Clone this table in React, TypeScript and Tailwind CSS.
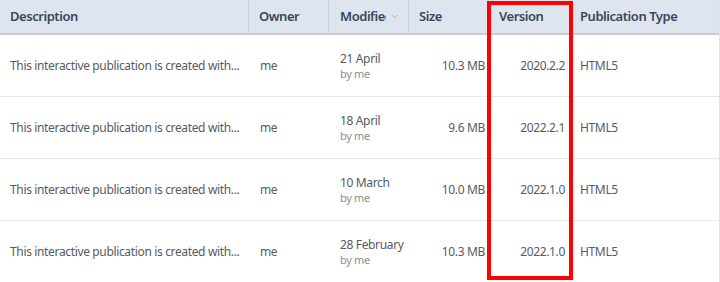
import React from 'react';
import { ChevronDown } from 'lucide-react';

const rows = [
  { date: '21 April', size: '10.3 MB', version: '2020.2.2' },
  { date: '18 April', size: '9.6 MB', version: '2022.2.1' },
  { date: '10 March', size: '10.0 MB', version: '2022.1.0' },
  { date: '28 February', size: '10.3 MB', version: '2022.1.0' },
];

const cols = 'grid grid-cols-[249px_80px_80px_80px_81px_1fr]';

const App: React.FC = () => {
  return (
    <div className="relative w-[720px] h-[282px] bg-white overflow-hidden font-['Noto_Sans',sans-serif]">
      <div className="border-r border-[#dfe3e8] h-full">
        {/* header */}
        <div className={`${cols} h-[35px] bg-[#dfe5ee] border-b-2 border-[#c8ced7] text-[13px] tracking-[-0.45px] font-semibold text-[#3a475a]`}>
          <div className="flex items-center pl-[10px] border-r border-[#c9d0da]">Description</div>
          <div className="flex items-center pl-[10px] border-r border-[#c9d0da]">Owner</div>
          <div className="flex items-center pl-[11px] pr-[6px] border-r border-[#c9d0da]">
            <span className="overflow-hidden whitespace-nowrap w-[46px]">Modified</span>
            <ChevronDown size={9} className="ml-[4px] text-[#9aa3ae]" />
          </div>
          <div className="flex items-center pl-[10px] border-r border-[#c9d0da]">Size</div>
          <div className="flex items-center pl-[10px] border-r border-[#c9d0da]">Version</div>
          <div className="flex items-center pl-[10px]">Publication Type</div>
        </div>

        {rows.map((r, i) => (
          <div key={i} className={`${cols} h-[62px] border-b border-[#e8e8e8] text-[12px] tracking-[-0.35px] text-[#555b63]`}>
            <div className="flex items-center pl-[10px] whitespace-nowrap">This interactive publication is created with...</div>
            <div className="flex items-center pl-[11px]">me</div>
            <div className="flex flex-col justify-center pl-[11px] leading-[15px]">
              <span>{r.date}</span>
              <span className="text-[11px] text-[#8a8f96]">by me</span>
            </div>
            <div className="flex items-center justify-end pr-[4px]">{r.size}</div>
            <div className="flex items-center justify-end pr-[5px]">{r.version}</div>
            <div className="flex items-center pl-[10px]">HTML5</div>
          </div>
        ))}
      </div>

      {/* highlight overlay */}
      <div className="absolute left-[487px] top-[1px] w-[86px] h-[279px] border-[4px] border-[#ff0000]" />
    </div>
  );
};

export default App;
